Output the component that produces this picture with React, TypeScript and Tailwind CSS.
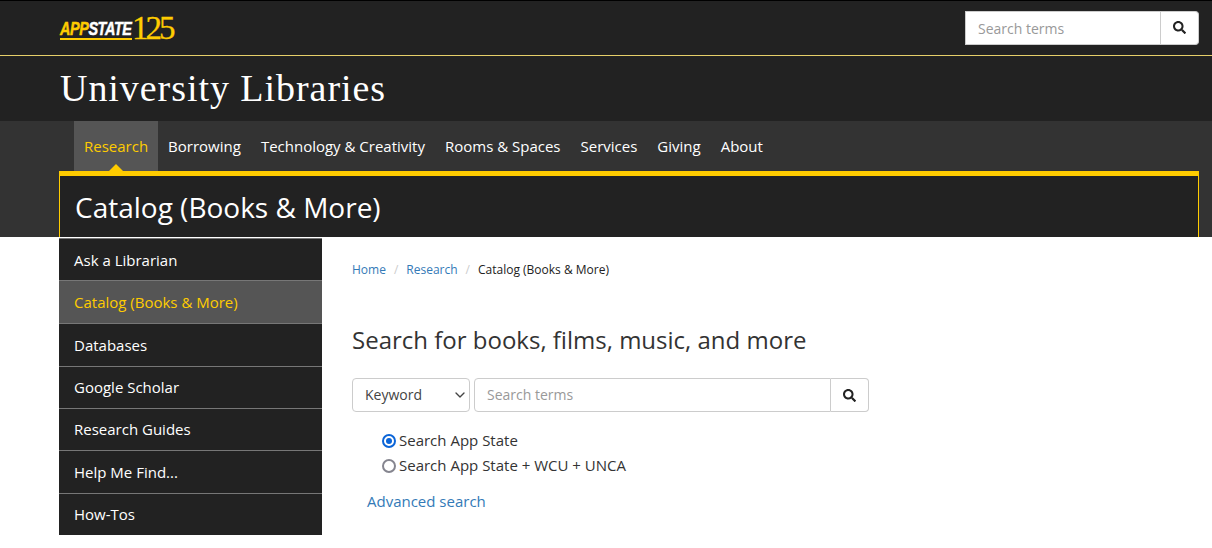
import { ChevronDown } from "lucide-react";
import { FaSearch } from "react-icons/fa";

const topNav = ["Research", "Borrowing", "Technology & Creativity", "Rooms & Spaces", "Services", "Giving", "About"];
const side = ["Ask a Librarian", "Catalog (Books & More)", "Databases", "Google Scholar", "Research Guides", "Help Me Find...", "How-Tos"];

export default function App() {
  return (
    <div className="h-[548px] overflow-hidden bg-white font-['Open_Sans',sans-serif] text-[#333]">
      <div className="h-[56px] bg-[#222] border-t border-t-black border-b border-b-[#e6cf6a] pl-[60px] pr-[13px] flex items-center justify-between">
        <div className="flex items-end h-[26px] leading-none">
          <span className="block w-[72px] border-b-2 border-[#ffcc00] pb-[1px] mb-[1px]">
            <span className="block w-[90px] origin-left scale-x-[0.8] font-['Liberation_Sans',sans-serif] font-bold italic text-[18px] leading-[15px] tracking-[-0.5px] text-[#ffcc00] [-webkit-text-stroke:0.5px]">
              APP<span className="text-white">STATE</span>
            </span>
          </span>
          <span className="font-['Liberation_Serif',serif] text-[33px] leading-[26px] tracking-[-3px] text-[#ffcc00] [-webkit-text-stroke:0.3px]">125</span>
        </div>
        <div className="flex h-[34px] w-[234px] mt-[-1px]">
          <div className="flex-1 bg-white border border-[#ccc] px-3 pt-px flex items-center text-[14px] text-[#999]">Search terms</div>
          <div className="w-[38px] bg-white border border-l-0 border-[#ccc] rounded-r flex items-center justify-center">
            <FaSearch size={13} className="text-[#222]" />
          </div>
        </div>
      </div>
      <div className="h-[65px] bg-[#222] pl-[60px] flex items-center">
        <h1 className="font-['Liberation_Serif',serif] text-[38px] tracking-[0.95px] text-white">University Libraries</h1>
      </div>
      <div className="h-[116px] bg-[#333] pl-[59px] pr-[13px] flex flex-col">
        <nav className="h-[50px] pl-[15px] flex text-[15px] text-white">
          {topNav.map((n, i) => (
            <a key={n} className={i === 0 ? "relative bg-[#555] text-[#ffcc00] px-[10px] flex items-center" : "px-[10px] flex items-center"}>
              {n}
              {i === 0 && <span className="absolute left-1/2 -translate-x-1/2 bottom-0 w-0 h-0 border-x-[7px] border-x-transparent border-b-[7px] border-b-[#ffcc00]" />}
            </a>
          ))}
        </nav>
        <div className="flex-1 bg-[#222] border-t-[5px] border-t-[#ffcc00] border-x border-x-[#ffcc00] pl-[15px] pt-[1px] flex items-center text-[28px] text-white">
          Catalog (Books &amp; More)
        </div>
      </div>
      <div className="flex pl-[59px] pt-px">
        <ul className="w-[263px] bg-[#222] text-[15px] text-white">
          {side.map((s, i) => (
            <li key={s} className={i === 1 ? "h-[43px] pl-[15px] flex items-center border-t border-[#777] bg-[#555] text-[#ffcc00]" : i === 0 ? "h-[42.33px] pl-[15px] pt-[2px] flex items-center border-t border-[#777]" : i === 6 ? "h-[42px] pl-[15px] flex items-center border-t border-[#777]" : "h-[42.33px] pl-[15px] flex items-center border-t border-[#777]"}>
              {s}
            </li>
          ))}
        </ul>
        <main className="pl-[30px] flex-1">
          <div className="mt-[24px] text-[12px] flex items-center h-[16px]">
            <a className="text-[#337ab7]">Home</a>
            <span className="text-[#ccc] mx-[8px]">/</span>
            <a className="text-[#337ab7]">Research</a>
            <span className="text-[#ccc] mx-[8px]">/</span>
            <span className="text-[#222]">Catalog (Books &amp; More)</span>
          </div>
          <h2 className="mt-[46px] text-[24px] leading-[32px] text-[#333]">Search for books, films, music, and more</h2>
          <div className="mt-[22px] flex h-[34px] w-[517px] text-[14px]">
            <div className="w-[118px] border border-[#ccc] rounded flex items-center justify-between pl-3 pr-[1px] pb-[1px] text-[#444]">
              Keyword
              <ChevronDown size={16} strokeWidth={2} />
            </div>
            <div className="flex-1 ml-[4px] border border-[#ccc] rounded-l px-3 pb-[1px] flex items-center text-[#999]">Search terms</div>
            <div className="w-[38px] border border-l-0 border-[#ccc] rounded-r flex items-center justify-center">
              <FaSearch size={13} className="text-[#222]" />
            </div>
          </div>
          <div className="mt-[16px] ml-[30px] flex flex-col text-[15px] leading-[25px]">
            <label className="flex items-center">
              <span className="w-[14px] h-[14px] rounded-full border-2 border-[#0b65d8] flex items-center justify-center mr-[3px]">
                <span className="w-[6px] h-[6px] rounded-full bg-[#0b65d8]" />
              </span>
              Search App State
            </label>
            <label className="flex items-center">
              <span className="w-[14px] h-[14px] rounded-full border-2 border-[#85858f] mr-[3px]" />
              Search App State + WCU + UNCA
            </label>
          </div>
          <a className="block mt-[13px] ml-[15px] text-[15px] leading-[20px] text-[#337ab7]">Advanced search</a>
        </main>
      </div>
    </div>
  );
}
